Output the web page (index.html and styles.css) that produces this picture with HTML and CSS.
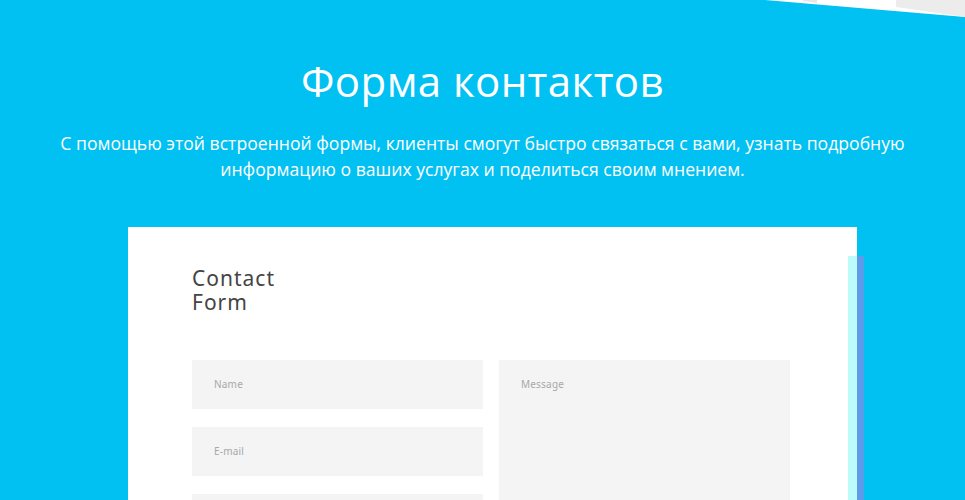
FILE: index.html
```html
<!DOCTYPE html>
<html lang="ru">
<head>
<meta charset="utf-8">
<title>Форма контактов</title>
<link rel="stylesheet" href="styles.css">
</head>
<body>
<div class="page">
  <svg class="corner" width="200" height="20" viewBox="0 0 200 20" aria-hidden="true">
    <polygon points="0,0 200,0 200,17" fill="#ffffff"/>
    <polygon points="131,0 200,0 200,17 131,7" fill="#ececec"/>
    <polygon points="38,0 52,0 52,3 38,1" fill="#e9e6e6"/>
  </svg>
  <header class="hero">
    <h1 class="title">Форма контактов</h1>
    <p class="lead">С помощью этой встроенной формы, клиенты смогут быстро связаться с вами, узнать подробную информацию о ваших услугах и поделиться своим мнением.</p>
  </header>
  <section class="card-wrap">
    <div class="card">
      <h2 class="card-title">Contact<br>Form</h2>
      <div class="form">
        <div class="col">
          <div class="field">Name</div>
          <div class="field">E-mail</div>
          <div class="field"></div>
        </div>
        <div class="col">
          <div class="field message">Message</div>
        </div>
      </div>
    </div>
    <div class="edge"></div>
  </section>
</div>
</body>
</html>
```
FILE: styles.css
```css
html, body {
  margin: 0;
  padding: 0;
  background: #01c1f3;
  overflow: hidden;
}
.page {
  position: relative;
  width: 965px;
  height: 500px;
  overflow: hidden;
}
.corner {
  position: absolute;
  top: 0;
  right: 0;
}
.hero {
  text-align: center;
  color: #ffffff;
  padding-top: 53px;
}
.title {
  margin: 0;
  font-family: "Open Sans", "Noto Sans", sans-serif;
  font-weight: 400;
  font-size: 42px;
  line-height: 56px;
  letter-spacing: 0.4px;
}
.lead {
  margin: 21px auto 0;
  width: 880px;
  font-family: "Open Sans", "Noto Sans", sans-serif;
  font-size: 17.6px;
  line-height: 26px;
  letter-spacing: 0;
}
.card-wrap {
  display: flex;
  margin: 45px 0 0 128px;
}
.card {
  box-sizing: border-box;
  width: 729px;
  height: 300px;
  background: #ffffff;
  padding: 39px 67px 0 64px;
}
.card-title {
  margin: 0;
  font-family: "Noto Sans", "Open Sans", sans-serif;
  font-weight: 400;
  font-size: 21px;
  line-height: 24px;
  color: #444444;
  letter-spacing: 1px;
}
.form {
  display: flex;
  gap: 16px;
  margin-top: 46px;
}
.col {
  width: 291px;
  display: flex;
  flex-direction: column;
  gap: 18px;
}
.field {
  height: 49px;
  box-sizing: border-box;
  padding: 18px 22px 0;
  background: #f4f4f4;
  font-family: "Noto Sans", "Open Sans", sans-serif;
  font-size: 10px;
  line-height: 12px;
  color: #a8a8a8;
  letter-spacing: 0.2px;
}
.field.message {
  height: 200px;
}
.edge {
  margin-top: 29px;
  margin-left: -9px;
  width: 9px;
  height: 300px;
  background: #bdfbfb;
  border-right: 7px solid #5b9bea;
}
```
